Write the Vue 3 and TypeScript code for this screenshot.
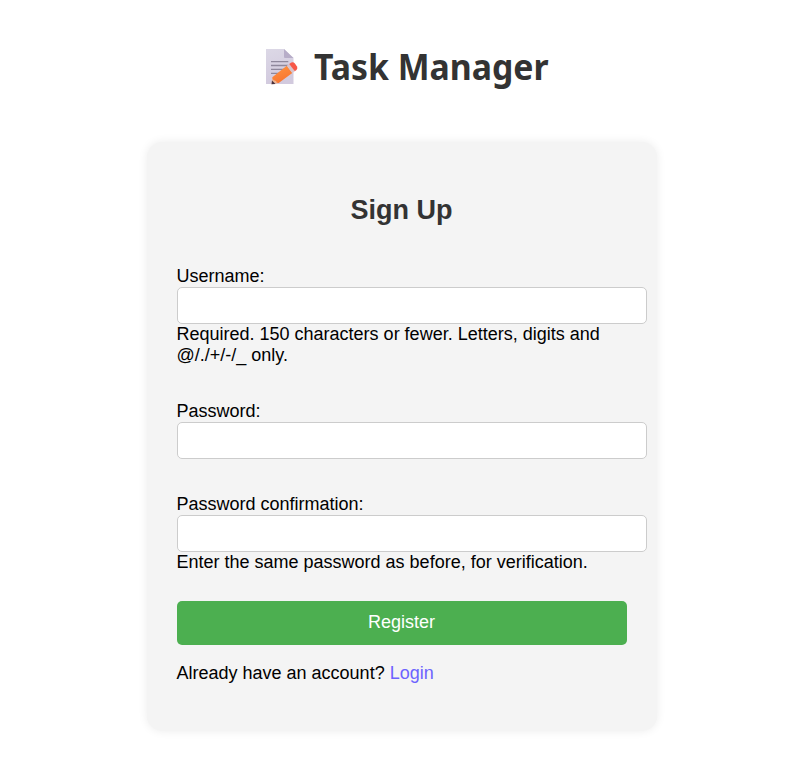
<script setup lang="ts">
import { reactive } from 'vue'

interface Field {
  name: 'username' | 'password1' | 'password2'
  label: string
  type: string
  help?: string
}

const fields: Field[] = [
  {
    name: 'username',
    label: 'Username:',
    type: 'text',
    help: 'Required. 150 characters or fewer. Letters, digits and @/./+/-/_ only.',
  },
  { name: 'password1', label: 'Password:', type: 'password' },
  {
    name: 'password2',
    label: 'Password confirmation:',
    type: 'password',
    help: 'Enter the same password as before, for verification.',
  },
]

const form = reactive({ username: '', password1: '', password2: '' })
</script>

<template>
  <div class="page">
    <header class="brand">
      <svg class="memo" viewBox="0 0 34 38" width="34" height="38" aria-hidden="true">
        <defs>
          <linearGradient id="paper" x1="0" y1="0" x2="0.3" y2="1">
            <stop offset="0" stop-color="#dcd8e6" />
            <stop offset="1" stop-color="#d2cade" />
          </linearGradient>
          <linearGradient id="pencil" x1="0" y1="0" x2="0.4" y2="1">
            <stop offset="0" stop-color="#ff9340" />
            <stop offset="1" stop-color="#f87632" />
          </linearGradient>
        </defs>
        <path d="M1 1H19L28.500 10V36H1Z" fill="url(#paper)" />
        <path d="M19 1L28.500 10H20Q19 10 19 9Z" fill="#b7adc8" />
        <path d="M6 13.700H23.300M6 17.500H23.300M6 21.400H20M6 25.300H14" stroke="#8e879c" stroke-width="1.3" />
        <path d="M6.500 36.300L7.300 29.500L14 35Z" fill="#edb391" />
        <path d="M6.500 36.300L7 32.500L10.500 36Z" fill="#49313e" />
        <path d="M7.300 29.300L21.800 17.800L27.300 25L13.700 35Q11.500 35.500 11 33Q7.500 32.500 7.300 29.300Z" fill="url(#pencil)" />
        <path d="M21.800 17.800L24.200 16L29.800 23.200L27.300 25Z" fill="#d9c3cb" />
        <path d="M24.200 16L26.300 14.500Q28.300 13.500 29.700 15.200L32 18.500Q33 20.500 31.500 21.900L29.800 23.200Z" fill="#f75748" />
      </svg>
      <h1>Task Manager</h1>
    </header>

    <main class="card">
      <h2>Sign Up</h2>
      <form @submit.prevent>
        <div v-for="field in fields" :key="field.name" class="field">
          <label :for="field.name">{{ field.label }}</label>
          <input :id="field.name" v-model="form[field.name]" :type="field.type" />
          <span v-if="field.help" class="help">{{ field.help }}</span>
        </div>
        <button type="submit">Register</button>
      </form>
      <p class="account">Already have an account? <a href="#">Login</a></p>
    </main>
  </div>
</template>

<style>
body {
  background: #fff;
}
</style>

<style scoped>
.page {
  display: flex;
  flex-direction: column;
  align-items: center;
  box-sizing: border-box;
  height: 783px;
  padding-left: 7px;
  overflow: hidden;
  font-family: "Liberation Sans", Arial, sans-serif;
  font-size: 18px;
  line-height: 21px;
  color: #000;
}
.brand {
  display: flex;
  align-items: flex-start;
  box-sizing: border-box;
  width: 285px;
  height: 142px;
  padding-top: 48px;
  flex-shrink: 0;
}
.memo {
  margin-left: 6px;
  flex-shrink: 0;
}
h1 {
  margin: -5px 0 0 15px;
  font-family: "Noto Sans", sans-serif;
  font-size: 36px;
  line-height: 48px;
  font-weight: 700;
  color: #333;
  white-space: nowrap;
  transform: scaleX(0.938);
  transform-origin: left;
}
.card {
  box-sizing: border-box;
  width: 510px;
  height: 589px;
  flex-shrink: 0;
  padding: 52px 30px 0;
  border-radius: 15px;
  background: #f4f4f4;
  box-shadow: 0 0 10px rgba(0, 0, 0, 0.08);
}
h2 {
  margin: 0 0 40px;
  font-size: 27px;
  line-height: 32px;
  text-align: center;
  color: #333;
}
.field {
  display: flex;
  flex-direction: column;
  margin-bottom: 35px;
}
.field:last-of-type {
  margin-bottom: 28px;
}
input {
  box-sizing: border-box;
  width: 470px;
  height: 37px;
  padding: 8px 10px;
  border: 1px solid #ccc;
  border-radius: 5px;
  background: #fff;
  font: inherit;
  outline: none;
}
button {
  display: block;
  width: 450px;
  height: 44px;
  padding: 0 0 2px;
  border: 0;
  border-radius: 5px;
  background: #4caf50;
  color: #fff;
  font: inherit;
  cursor: pointer;
}
.account {
  margin: 18px 0 0;
}
a {
  color: #6c63ff;
  text-decoration: none;
}
</style>
